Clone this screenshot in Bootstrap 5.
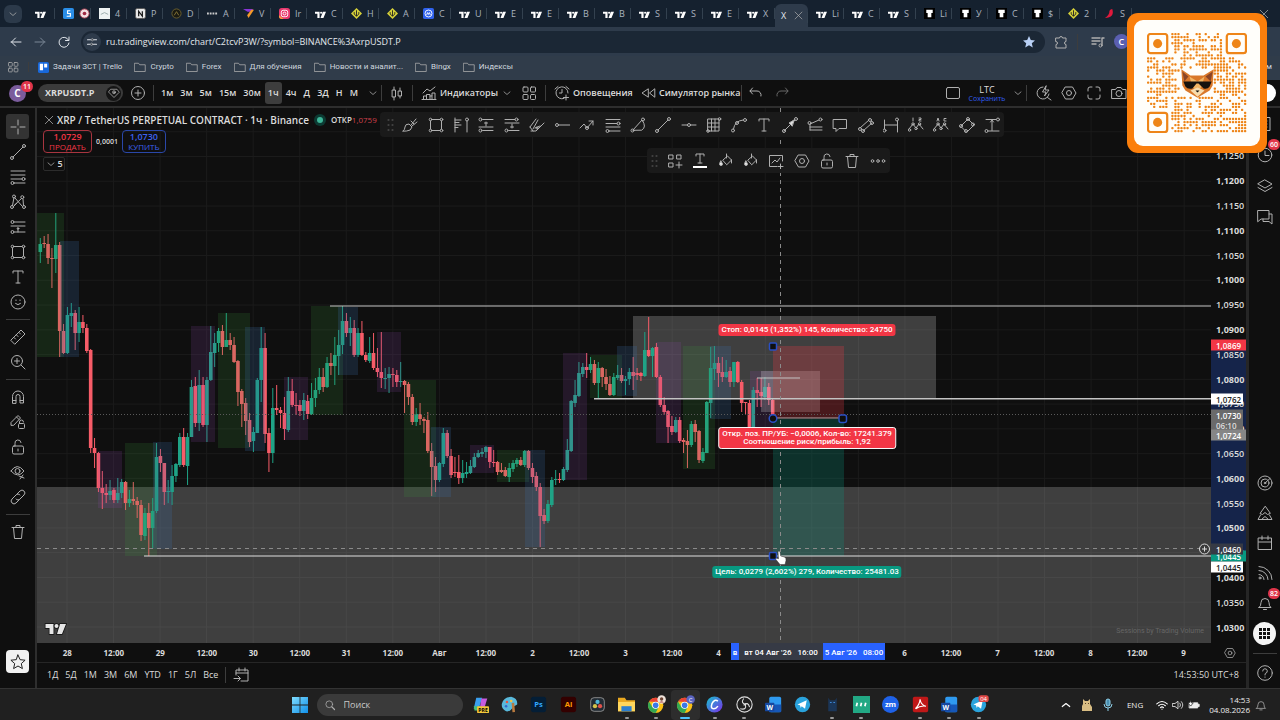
<!DOCTYPE html>
<html lang="ru" data-bs-theme="dark">
<head>
<meta charset="utf-8">
<meta name="viewport" content="width=device-width, initial-scale=1">
<title>XRPUSDT.P — TradingView</title>
<link href="https://cdn.jsdelivr.net/npm/bootstrap@5.3.0/dist/css/bootstrap.min.css" rel="stylesheet">
<style>
body{font:600 9px/12px "Open Sans","Noto Sans",sans-serif;background:#0f0f0f;color:#dbdbdb;min-width:0}
button,input{font:inherit;color:inherit}
button{background:none;border:0;padding:0;display:inline-flex;align-items:center;justify-content:center;flex:none;white-space:nowrap}
a{color:inherit;text-decoration:none}
svg{flex:none;display:block}
.ic{width:16px;height:16px;fill:none;stroke:#b0b0b0;stroke-width:1;stroke-linecap:round;stroke-linejoin:round}
.ic-s{width:12px;height:12px}
.vr-line{width:1px;height:16px;background:#3d3d3d;flex:none}
/* browser chrome */
.tabstrip{height:27px;background:#15212f;color:#aab3bf;font-weight:400}
.tab-more{width:18px;height:18px;border-radius:6px;background:#2c3a4a;margin:0 3px 0 4px}
.tab-item{width:36px;height:27px;padding-left:8px;gap:5px;position:relative;overflow:hidden}
.tab-item::after{content:"";position:absolute;right:0;top:8px;height:11px;width:1px;background:#33414f}
.tab-item svg{width:11px;height:11px}
.tab-first{width:30px;padding-left:10px}
.tab-on{width:33px;height:23px;margin-top:4px;background:#2e3b4b;border-radius:6px 6px 0 0;color:#e4e8ee;gap:7px;padding-left:6px}
.addr{height:29px;background:#2e3b4b}
.addr .navi{width:24px;height:22px}
.omni{height:22px;border-radius:11px;background:#1b2735;margin-left:5px;padding-left:2px}
.omni input{background:none;border:0;outline:0;font-weight:400;color:#e3e7ec;padding:0 0 0 5px;min-width:0}
.site-i{width:18px;height:18px;border-radius:50%;background:#2e3b4b}
.marks{height:24px;background:#303c4a;font:400 8px/12px Roboto,"Noto Sans",sans-serif;color:#cfd6de;gap:12px;padding:0 0 2px 7px}
.marks a{gap:4px}
/* application header */
.apphead{height:26px;background:#0f0f0f}
.split{height:2px;background:#2e2e2e}
.av{width:35px}
.av-c{width:17px;height:17px;border-radius:50%;background:#7b5c9c;color:#fff;font-weight:700;font-size:10px;line-height:17px}
.count{font-size:7px;line-height:11px;height:11px;min-width:11px;border-radius:6px;background:#e0354a;color:#fff;padding:0 2px}
.sym{width:85px;height:18px;border-radius:9px;background:#3b3b3b;padding:0 2px 0 7px;margin-left:3px;font-weight:700}
.sym i{width:15px;height:15px;border-radius:50%;background:#141414}
.tf{width:211px;padding:0 4px}
.tf button{height:22px;border-radius:3px;padding:0 3px}
.tf .on{background:#3d3d3d}
.h-right{width:340px}
.h-right>button{width:25px;height:24px}
.txt-btn{gap:3px;justify-content:start}
/* work area */
.leftbar{width:35px;padding-top:6px}
.leftbar button{width:23px;height:25px}
.leftbar .on{background:#333;border-radius:3px}
.sep{width:24px;height:10px}
.sep::after{content:"";display:block;border-top:1px solid #3d3d3d;margin-top:5px}
.vsplit{width:2px;background:#2e2e2e}
.vsplit-r{width:3px;background:#262626}
.rightbar{width:31px}
.rightbar button{width:31px;height:31px}
.rightbar .low button{height:30px}
.plot{overflow:hidden;background:#0f0f0f}
.plot>svg{width:100%;height:100%}
.legend{left:6px;top:4px}
.sym-name{font-size:10px}
.dot{width:6px;height:6px;border-radius:50%;background:#3db597;box-shadow:0 0 0 3px #0c3b33}
.trade{border:1px solid #a83540;border-radius:4px;color:#f23645;line-height:10px;height:23px;width:49px;flex-direction:column}
.trade small{font-size:8px;font-weight:400}
.trade.buy{border-color:#2a47a8;color:#3d62f0;width:44px}
.hidebox{border:1px solid #2c2c2c;border-radius:2px;width:22px;height:14px}
.float-bar{background:#1a1a1a;border-radius:4px;height:25px}
.float-bar button{flex:1 1 0;min-width:0}
.fb1{left:29.2%;top:4px;width:53.2%;padding-left:3px}
.fb2{left:52%;top:40px;width:20.7%}
.grip{width:15px;flex:none}
.tag{font:500 8px/8px Roboto,"Noto Sans",sans-serif;border-radius:3px;color:#fff;padding:2px 3px;white-space:nowrap;transform:translate(-50%,-50%)}
.red{background:#f23645}.green{background:#089981}
.watermark{right:7px;bottom:6px;font:400 7px/12px Roboto,"Noto Sans",sans-serif;color:#666}
.paxis{width:35px;padding:36px 0 3px}
.paxis .lab{flex:1 1 0;padding-left:5px;position:relative}
.paxis .lab:nth-child(odd){font-weight:700}
.paxis .ptag{position:absolute;left:0;height:11px;font-size:8px;line-height:11px;padding-left:5px;transform:translateY(-50%)}
.band{left:0;right:0;background:#15244a}
.taxis{height:20px;padding:0 4px 0 7px;font-size:8px;font-weight:700;border-bottom:1px solid #262626}
.taxis span{flex:1 1 0;min-width:0;text-align:center;white-space:nowrap}
.taxis .ttag{position:absolute;top:0;height:17px;font:500 8px/19px Roboto,"Noto Sans",sans-serif;color:#fff;white-space:pre}
.ranges{height:25px;font-weight:400;padding:0 7px 2px 10px}
.ranges .rg{gap:7px}
/* taskbar */
.taskbar{height:32px;background:#202020;border-top:1px solid #333;display:grid;grid-template-columns:1fr auto 1fr;align-items:center;font-weight:400}
.search{width:146px;height:22px;border-radius:11px;background:#3a3a3a;padding:0 7px;margin-left:4px}
.search input{background:none;border:0;outline:0;width:100px;padding:0}
.search input::placeholder{color:#c8c8c8;opacity:1}
.apps{width:528px;margin-left:3px}
.apps button{flex:1 1 0;height:30px;position:relative;border-radius:4px}
.apps svg{width:17px;height:17px}
.apps .run::after{content:"";position:absolute;bottom:1px;width:4px;height:2px;background:#999;border-radius:1px}
.apps .act{background:#2d2d2d}
.apps .act::after{width:10px;background:#4cc2ff}
.tray{gap:5px;padding-right:13px;font-size:8px;color:#eee}
/* promo card */
.promo{position:absolute;top:13px;right:13px;width:140px;height:140px;border-radius:11px;background:#fb7f0c;padding:7px}
.promo-in{border-radius:9px;background:#fffefa;padding:13px;height:100%}
.promo svg{width:100%;height:100%}
</style>
</head>
<body class="vh-100 d-flex flex-column overflow-hidden position-relative">

<nav class="tabstrip d-flex align-items-center" id="tabs" aria-label="Вкладки"></nav>

<div class="addr d-flex align-items-center">
  <button class="navi ms-1" data-i="back" aria-label="Назад"></button>
  <button class="navi" data-i="fwd" aria-label="Вперёд"></button>
  <button class="navi" data-i="reload" aria-label="Обновить"></button>
  <div class="omni d-flex align-items-center" style="width:75.3%">
    <span class="site-i d-flex align-items-center justify-content-center" data-is="tune"></span>
    <input class="flex-grow-1" aria-label="Адрес" value="ru.tradingview.com/chart/C2tcvP3W/?symbol=BINANCE%3AxrpUSDT.P">
    <button class="me-2" data-i="starf" aria-label="В закладки"></button>
  </div>
  <button class="ms-2" data-i="puzzle" aria-label="Расширения"></button>
  <span class="vr-line mx-2"></span>
  <button class="ms-1" data-i="playlist" aria-label="Медиа"></button>
  <button class="ms-2 rounded-circle text-white" style="background:#5a5fb0;width:15px;height:15px">C</button>
</div>

<nav class="marks d-flex align-items-center" id="marks" aria-label="Закладки"></nav>

<header class="apphead d-flex align-items-center">
  <button class="av position-relative" aria-label="Профиль"><span class="av-c">C</span><span class="count position-absolute top-0 end-0" style="margin:-4px 2px">11</span></button>
  <button class="sym justify-content-between">XRPUSDT.P <i class="d-flex align-items-center justify-content-center" data-is="gem"></i></button>
  <button style="width:30px" data-i="plusc" aria-label="Сравнить"></button>
  <span class="vr-line"></span>
  <div class="tf d-flex justify-content-between align-items-center">
    <button>1м</button><button>3м</button><button>5м</button><button>15м</button><button>30м</button><button class="on">1ч</button><button>4ч</button><button>Д</button><button>3Д</button><button>Н</button><button>М</button>
  </div>
  <button style="width:16px" data-is="chev" aria-label="Интервалы"></button>
  <span class="vr-line"></span>
  <button style="width:30px" data-i="candle" aria-label="Свечи"></button>
  <span class="vr-line"></span>
  <button class="ms-2 txt-btn" style="width:72px" data-i="indic">Индикаторы</button>
  <button class="ms-1" style="width:20px" data-is="chev" aria-label="Избранное"></button>
  <button style="width:24px" data-i="grid4" aria-label="Шаблоны"></button>
  <span class="vr-line ms-1"></span>
  <button class="ms-2 txt-btn" style="width:86px" data-i="alarm">Оповещения</button>
  <button class="txt-btn" style="width:97px" data-i="rewind">Симулятор рынка</button>
  <span class="vr-line ms-1"></span>
  <button style="width:28px" data-i="undo" aria-label="Отменить"></button>
  <button style="width:24px;opacity:.55" data-i="redo" aria-label="Повторить"></button>
  <div class="h-right ms-auto d-flex align-items-center">
    <button data-i="square" aria-label="Макет"></button>
    <button class="flex-column" style="width:44px;font-weight:400;line-height:10px">LTC<span style="color:#2f5cf0;font-size:7px;line-height:7px">Сохранить</span></button>
    <button style="width:17px" data-is="chev" aria-label="Меню макета"></button>
    <span class="vr-line"></span>
    <button class="ms-1" data-i="quick" aria-label="Поиск"></button>
    <button data-i="hex" aria-label="Настройки"></button>
    <button data-i="full" aria-label="Во весь экран"></button>
    <button data-i="camera" aria-label="Снимок"></button>
    <button class="ms-auto me-1 rounded-pill bg-white" style="width:64px;height:18px" aria-label="Публикация"></button>
  </div>
</header>
<div class="split"></div>

<main class="d-flex flex-grow-1" style="min-height:0">
  <aside class="leftbar d-flex flex-column align-items-center" id="left"></aside>
  <div class="vsplit"></div>

  <section class="flex-grow-1 d-flex flex-column" style="min-width:0">
    <div class="d-flex flex-grow-1" style="min-height:0">
      <div class="plot flex-grow-1 position-relative" style="min-width:0">
        <svg id="chart" class="position-absolute" viewBox="37 108 1174 535" preserveAspectRatio="xMinYMin slice" aria-label="График XRPUSDT.P"></svg>
        <div class="legend position-absolute">
          <div class="d-flex align-items-center text-nowrap" style="height:15px">
            <span data-is="x" style="width:14px"></span><span class="sym-name">XRP / TetherUS PERPETUAL CONTRACT · 1ч · Binance</span>
            <span class="dot ms-2 me-2"></span><span style="font-size:8px">ОТКР<span style="color:#d0404b;font-weight:400">1,0759</span></span>
          </div>
          <div class="d-flex align-items-center" style="margin-top:3px;gap:4px">
            <button class="trade">1,0729<small>ПРОДАТЬ</small></button><span style="font-size:7px">0,0001</span>
            <button class="trade buy">1,0730<small>КУПИТЬ</small></button>
          </div>
          <button class="hidebox mt-1" data-is="chev">5</button>
        </div>
        <div class="float-bar fb1 position-absolute d-flex align-items-center" id="fb1"></div>
        <div class="float-bar fb2 position-absolute d-flex align-items-center" id="fb2"></div>
        <div id="tags"></div>
        <span class="watermark position-absolute">Sessions by Trading Volume</span>
      </div>
      <div class="paxis d-flex flex-column position-relative" id="paxis"></div>
    </div>
    <div class="d-flex">
      <div class="taxis flex-grow-1 d-flex align-items-center position-relative" id="taxis" style="min-width:0"></div>
      <button class="taxis" style="width:35px" data-is="hex" aria-label="Настройки шкалы"></button>
    </div>
    <div class="ranges d-flex align-items-center justify-content-between">
      <div class="rg d-flex align-items-center"><button>1Д</button><button>5Д</button><button>1М</button><button>3М</button><button>6М</button><button>YTD</button><button>1Г</button><button>5Л</button><button>Все</button><span class="vr-line"></span><button data-i="goto" aria-label="Перейти к дате"></button></div>
      <button>14:53:50 UTC+8</button>
    </div>
  </section>

  <div class="vsplit-r"></div>
  <aside class="rightbar d-flex flex-column justify-content-between align-items-center">
    <div class="d-flex flex-column" id="r1"></div>
    <div class="low d-flex flex-column align-items-center" id="r2"></div>
  </aside>
</main>

<footer class="taskbar">
  <div></div>
  <div class="d-flex align-items-center">
    <button style="width:26px;height:30px" aria-label="Пуск"><svg width="16" height="16" viewBox="0 0 16 16"><defs><linearGradient id="wg" x2="1" y2="1"><stop stop-color="#7fdcff"/><stop offset="1" stop-color="#1090e8"/></linearGradient></defs><path fill="url(#wg)" d="M0 0h7.6v7.6H0zM8.4 0H16v7.6H8.4zM0 8.4h7.6V16H0zM8.4 8.4H16V16H8.4z"/></svg></button>
    <label class="search d-flex align-items-center gap-2" data-is="glass"><input placeholder="Поиск" aria-label="Поиск"></label>
    <div class="apps d-flex" id="apps"></div>
  </div>
  <div class="tray d-flex align-items-center justify-content-end">
    <button data-is="up" aria-label="Значки"></button>
    <svg class="mx-1" width="12" height="13" viewBox="0 0 12 13"><path fill="#d9bd83" d="M2 1l2 2h3l2-2v5l2 3v4H1V8l1-2z"/><path fill="#5b4426" d="M4 5h1v1H4zM7 5h1v1H7z"/></svg>
    <svg class="me-1" width="12" height="14" viewBox="0 0 12 14" fill="none" stroke="#8fd0e8"><rect x="4" y="1" width="4" height="7" rx="2" fill="#4a8fb0"/><path d="M2 6a4 4 0 0 0 8 0M6 10v3"/></svg>
    <span class="mx-1">ENG</span>
    <span class="d-flex gap-1 ms-1" id="sys"></span>
    <span class="text-end ms-1" style="line-height:10px">14:53<br>04.08.2026</span>
    <button data-is="bell" aria-label="Уведомления"></button>
  </div>
</footer>

<div class="promo"><div class="promo-in"><svg id="qr" viewBox="0 0 99 99" aria-label="QR-код"></svg></div></div>

<script>
// Line icons on a 16-unit grid. c(x,y,r) is a shorthand for a small ring.
const c=(x,y,r=1.5)=>`<circle cx="${x}" cy="${y}" r="${r}"/>`, p=(d,a='')=>`<path d="${d}" ${a}/>`;
const I={
 back:p('M13 8H3M7.500 4L3.500 8l4 4','stroke="#dfe4ea"'),
 fwd:p('M3 8h10M8.500 4l4 4-4 4','stroke="#7b8897"'),
 reload:p('M12.500 6A5 5 0 1 0 13 9M13 3v3.500H9.500','stroke="#dfe4ea"'),
 tune:p('M2 5h4M11 5h3M2 11h3M10 11h4','stroke="#dfe4ea" stroke-width="1.5"')+c(8.5,5)+c(7.5,11),
 starf:p('M8 2l1.800 4 4.200.4-3.200 2.800 1 4.300L8 11.300 4.200 13.500l1-4.300L2 6.400 6.200 6z','fill="#b9d0f5" stroke="none"'),
 puzzle:p('M3 4h3.500a1.500 1.500 0 0 1 3 0H13v3.500a1.500 1.500 0 0 0 0 3V14H3v-3.500a1.500 1.500 0 0 0 0-3z'),
 playlist:p('M2 4h8M2 7h8M2 10h4M12 11V4h2','stroke-width="1.4"')+c(10.5,11.500),
 gem:p('M4 3h8l3 4-7 7-7-7z')+c(8,7,2)+c(8,7,.6),
 plusc:c(8,8,6.5)+p('M8 5v6M5 8h6'), chev:p('M4 6.500l4 3.500 4-3.500'), up:p('M3 10l5-4 5 4','stroke="#fff" stroke-width="1.6"'),
 candle:p('M5 2v3M5 12v3M11 3v3M11 11v2')+'<rect x="3.500" y="5" width="3" height="7"/><rect x="9.500" y="6" width="3" height="5"/>',
 indic:p('M2 8l4-4 3 2 5-4M1 14.500h14M2.500 14v-3h3M5.500 14V9.500h3.500V14M9 11h2V8h3v6.500M11 14v-3'),
 grid4:['2 2','9.500 2','2 9.500','9.500 9.500'].map(s=>{const[x,y]=s.split(' ');return`<rect x="${x}" y="${y}" width="5" height="5" rx="1"/>`}).join(''),
 alarm:p('M10 13.500A6 6 0 1 1 14 8M8 4.500V8H5.500M1 4l3-2.500M12 1.500L15 4M12 10v5M9.500 12.500h5'),
 rewind:p('M8 4L2 8l6 4zM14.500 4l-5 4 5 4z'), undo:p('M4.500 3L2 6l2.500 3M2 6h7a4 4 0 0 1 4 5'), redo:p('M11.500 3L14 6l-2.500 3M14 6H7a4 4 0 0 0-4 5'),
 square:'<rect x="1.500" y="2.500" width="13" height="11" rx="1.500"/>',
 quick:p('M7 2a6 6 0 1 0 6 7M11.500 12.500L15 15M10 1L6.500 7H10L8.500 11 13 5H9.500z'),
 hex:p('M4.500 2h7L15 8l-3.500 6h-7L1 8z')+c(8,8,2.5),
 full:p('M2 6V4a2 2 0 0 1 2-2h2M10 2h2a2 2 0 0 1 2 2v2M14 10v2a2 2 0 0 1-2 2h-2M6 14H4a2 2 0 0 1-2-2v-2'),
 camera:p('M1 4.500h3.500L6 2.500h4l1.500 2H15v9H1z')+c(8,8.500,3),
 cross:p('M8 1v5M8 10v5M1 8h5M10 8h5'),
 trend:p('M3 13L13 3')+c(2,14)+c(14,2),
 fibs:p('M1 2h14M1 6h14M1 10h11M4 14h11')+c(13.500,10)+c(2.500,14),
 fibs2:p('M1 2.500h14M1 6.500h11M1 10h14M4 14h11')+c(13.500,6.500)+c(2.500,14),
 xabcd:p('M2.500 11.500L4 3.500M5 4l7 8M4 11.500l7.500-7M13 5l.5 6.500M4 12l3-3')+c(4,2.500)+c(12.300,3.200)+c(2,13)+c(14,13),
 forecast:p('M5 3h10M1 7h14M5 13h10M8 9v4')+c(2.500,3)+c(2.500,13)+c(8,9.500,.8),
 long:p('M5 2.500h10M5 13.500h10M1 10h14M8 9V5M6.500 6h3')+c(2.500,2.500)+c(2.500,13.500),
 short:p('M1 2.500h10M1 6h14M5 13.500h10M8 7v4M6.500 10h3')+c(12.500,2.500)+c(2.500,13.500),
 rect:p('M4 2.500h8M4 13.500h8M2.500 4v8M13.500 4v8')+c(2.500,2.500,1.300)+c(13.500,2.500,1.300)+c(2.500,13.500,1.300)+c(13.500,13.500,1.300),
 text:p('M3 4V2h10v2M8 2v12M6 14h4'), textu:p('M4 3V1h8v2M8 1v9M6 10h4')+p('M1 13h14v2H1z','fill="#fff" stroke="none"'),
 smile:c(8,8,7)+p('M5.500 9.500q2.500 2.500 5 0M6 6v.500M10 6v.500'),
 ruler:p('M1 11L11 1l4 4L5 15zM4 8.500l1.500 1.500M6.500 6L8 7.500M9 3.500L10.500 5'),
 zoom:c(7,7,5.5)+p('M11 11l4 4M7 4.500v5M4.500 7h5'), glass:c(7,7,4.5)+p('M10.500 10.500L14 14','stroke-width="1.600"'),
 magnet:p('M2.500 14V7.500a5.500 5.500 0 0 1 11 0V14h-3.500V7.500a2 2 0 0 0-4 0V14zM2.500 11.500H6M10 11.500h3.500'),
 penlock:p('M1 11V8.500l7-7L10.500 4 4 11zM6.500 3L9 5.500M9.500 9.500V8a2 2 0 0 1 4 0')+'<rect x="8.500" y="9.500" width="6" height="5" rx="1"/>',
 lock:'<rect x="2.500" y="7" width="11" height="8" rx="1.500"/>'+p('M5 7V4.500a3 3 0 0 1 6-1M8 10v2'),
 eye:p('M1 7q6-9 13 0-6 8-13 0M9 12l5 2M10 15l3-4')+c(7.500,7,2.5),
 link:p('M7 5l3-3a2.500 2.500 0 0 1 4 4l-4 4a2.500 2.500 0 0 1-4 0M9 11l-3 3a2.500 2.500 0 0 1-4-4l4-4a2.500 2.500 0 0 1 4 0'),
 trash:p('M2 3.500h12M6 3.500V1.500h4v2M3.500 3.500l1 11h7l1-11'),
 star:p('M8 1l2.100 4.700 5 .5-3.800 3.400 1.100 5L8 12l-4.400 2.600 1.100-5L.9 6.200l5-.5z','stroke="#222"'),
 brush:p('M1 14q2-1 2-4t4-3l3 3q-1 4-5 4zM9 8l5-6M10 9l5-4M9 4l3 3'),
 profile:p('M2 1v14M2 3h6M2 5.500h4M2 8h6M2 10.500h3M14 4v11')+c(14,2.500),
 high:p('M1 10l6-8M4 12L9 3M2 14h5L15 6M6 11l5-2M1 10l3 4')+c(8,11,1),
 hray:p('M5 8h11')+c(3,8), zig:p('M1 11l4-4 3 4 6-7M10 4h4v4')+c(8,11), 
 arc:p('M3 13L12 3q5 7 0 10z')+c(13,2.500)+c(2.500,13.500), hline:p('M1 8h5.500M9.500 8H15')+c(8,8),
 gridb:p('M2 2h11v12H2zM5.500 2v12M9 2v12M2 6h11M2 10h11')+c(13.500,2,1.300)+c(2,14,1.300),
 curve:p('M2.500 12q1-8 9.500-9')+c(2,13.500)+c(6,6)+c(14,3),
 arrow:p('M2 14L13 3')+p('M12 3L7 6l3 3z','fill="#ddd"')+c(14,2)+c(2,14),
 pitch:p('M3 7L12 3M3 10h12M3 13h12M3 7v6')+c(2.500,6)+c(13.500,2.500),
 comment:p('M1.500 2.500h13v9H7l-3 3v-3H1.500z'), channel:p('M2 11l9-8M5 14l9-8')+c(2,12)+c(12,3)+c(5,14)+c(14,6),
 range:p('M1.500 3v9M14.500 4v11M2 8h12')+c(1.500,13.500)+c(14,2.500),
 wave:p('M1 12l4-5 3 4 3-4 4 5')+c(1.500,13,1.200)+c(5,7,1.200)+c(8,11.500,1.200)+c(11.500,7,1.200)+p('M5 1v3M11 1h2v1.500h-2V4h2'),
 wave2:p('M1 12l4-5 3 4 3-4 4 5')+c(1.500,13,1.200)+c(5,7,1.200)+c(8,11.500,1.200)+c(11.500,7,1.200)+p('M4 4l1-3 1 3M13 1.500h-2v2.500h2'),
 rot:p('M2 9l7-7 6 6-7 7z')+c(9,2,1.500)+c(2,9,1.500)+c(14,7.500,1.500)+c(7,14,1.500),
 measure:p('M2 2.500h10M5 14h10M8 3v10.500M6.500 5L8 3l1.500 2')+c(14,2.500)+c(2.500,14),
 addt:p('M2 2h4v4H2zM10 2h4v4h-4zM2 10h4v4H2zM12 9v6M9 12h6'),
 bucket:p('M5 7l4.500-4 4 4-4.500 4.500zM8.500 1v4M13.500 7v3')+p('M1.500 11a1.500 1.500 0 1 0 3 0L3 8z','fill="#eee"'),
 img:p('M14.500 8V2.500h-13v11H9M4 10l3-3 2 2 3-4M12.500 11v5M10 13.500h5'),
 dots:c(2.500,8,1.300)+c(8,8,1.300)+c(13.500,8,1.300),
 list:p('M2 1.500h11v13H2zM5 5h5M5 8h5M5 11h5'), clock:c(8,8,6.8)+p('M8 4v4.500h4'),
 layers:p('M8 2l7 4-7 4-7-4zM1 9.500l7 4 7-4'), chat:p('M1 1.500h11v8.500H4L1 12.500zM12 5h3v10l-3-2.500H6V10'),
 target:c(8,8,7)+c(8,8,4)+c(8,8,.8)+p('M8 8l5-4.500'), pyr:p('M8 1.500L3 8.500l2.500 1L8 7.500l2.500 2 2.500-1zM3.500 10L1 14.500h14L12.500 10M4.500 14.500L8 11.500l3.500 3'),
 cal:p('M1.500 3h13v11.500h-13zM1.500 7h13M5 1v3.500M11 1v3.500'), rss:c(3,13,1)+p('M2 9.500a5 5 0 0 1 5 5M2 5.500a9 9 0 0 1 9 9M2 1.500a13 13 0 0 1 13 13'),
 bell:p('M2 12.500h12q-2-1-2-5a4 4 0 0 0-8 0q0 4-2 5zM6.500 14.500h3'), help:c(8,8,7.3)+p('M5.700 6a2.300 2.300 0 1 1 2.800 2.300Q8 8.500 8 10M8 12v.3'),
 goto:p('M3 8V3h12v11H8M3 6h12M6 1v3M12 1v3M1 11.500h6M5 9l2.500 2.500L5 14'), x:p('M3 3l10 10M13 3L3 13'),
 folder:p('M1 3h5l1.500 2H15v9H1z'), grip:[3,8,13].map(y=>`<path d="M5 ${y}h1M9 ${y}h1" stroke="#666"/>`).join(''),
 wifi:p('M1 6.500q7-6.500 14 0M3.500 9q4.500-4 9 0M6 11.500q2-2 4 0M8 13.500v.2','stroke="#fff" stroke-width="1.400"'),
 vol:p('M1 6h3l4-3v10l-4-3H1zM10.500 5.500q2 2.500 0 5M12.500 3.500q4 4.500 0 9','stroke="#fff"'),
 bat:p('M2 5h11v7H2zM13 7h2v3h-2z','fill="#eee" stroke="#eee"')+p('M1 6l3-4v3h3L4 9z','fill="#fff" stroke="#202020"')
};
const ic=(n,s='')=>`<svg class="ic ${s}" viewBox="0 0 16 16" aria-hidden="true">${I[n]}</svg>`;
document.querySelectorAll('[data-i]').forEach(e=>e.insertAdjacentHTML('afterbegin',ic(e.dataset.i)));
document.querySelectorAll('[data-is]').forEach(e=>e.insertAdjacentHTML('afterbegin',ic(e.dataset.is,'ic-s')));
const $=id=>document.getElementById(id), btn=(n,k='')=>`<button class="${k}" aria-label="${n}">${ic(n)}</button>`;

// Browser tabs: favicon and the first letter of the title.
const tv='<path fill="#fff" d="M0 4h5v7H2.600V6.400H0zM8.600 4H12L9.200 11H6z"/><circle cx="6.700" cy="5.200" r="1.200" fill="#fff"/>';
const fav={tv,
 sb:'<rect width="12" height="12" rx="2" fill="#2a8ee8"/><path d="M8 3H5v3h3v3H4" stroke="#fff" stroke-width="1.300" fill="none"/>',
 pic:'<rect width="12" height="12" fill="#eef2f2"/><path d="M2 7l4-2 4 2" stroke="#9aa" fill="none"/>',
 no:'<rect x=".5" y=".5" width="11" height="11" rx="2" fill="#e8e8e8" stroke="#555"/><path d="M4 9V3.500L8 9V3.500" stroke="#111" stroke-width="1.300" fill="none"/>',
 gold:'<circle cx="6" cy="6" r="5" fill="#1a1a12" stroke="#6f6230"/><path d="M3.500 8L6 4l2.500 4" stroke="#8a7838" fill="none"/>',
 by:'<path d="M0 6h12" stroke="#ccc" stroke-width="2" stroke-dasharray="2 1"/>',
 v:'<path fill="#8a35d8" d="M0 1h11L9 4H5z"/><path fill="#f59a2b" d="M12 2L6 11 4.500 8 9 2z"/>',
 ig:'<rect width="12" height="12" rx="3" fill="#e8386e"/><path fill="#f9a03c" d="M0 8l5 4H3a3 3 0 0 1-3-3z"/><rect x="2.500" y="2.500" width="7" height="7" rx="2" fill="none" stroke="#fff"/><circle cx="6" cy="6" r="1.600" fill="none" stroke="#fff"/>',
 ye:'<path d="M6 0l6 6-6 6-6-6z" fill="#d6d13a"/><path d="M3.500 4.500v2L6 9l2.500-2.500v-2M6 2.500V9" stroke="#222" fill="none"/>',
 cm:'<rect width="12" height="12" rx="2" fill="#2f62ee"/><circle cx="6" cy="6" r="3.800" fill="none" stroke="#fff"/><path d="M4 7.500L5 5l1 2 1-2 1 2.500" stroke="#fff" fill="none"/>',
 bk:'<rect width="12" height="12" fill="#000"/><path fill="#fff" d="M2.500 2h7v3.500H8V10H4V5.500H2.500z"/>',
 ch:'<path fill="#e0193c" d="M9 1q3 9-8 10 5-3 5-8 1-2 3-2z"/>'};
const fv=n=>`<svg viewBox="0 0 12 12">${fav[n]}</svg>`;
const tabs='sb: pic:4 no:P gold:D by:A v:V ig:Ir tv:C ye:H ye:A cm:C tv:U tv:E tv:E tv:B tv:B tv:S tv:S tv:E tv:X ON tv:Li tv:C tv:S bk:Li bk:У bk:C bk:$ ye:2 ch:S'.split(' ');
$('tabs').innerHTML=`<button class="tab-more" aria-label="Список">${ic('chev','ic-s')}</button><a href="#" class="tab-item tab-first d-flex align-items-center">${fv('tv')}</a>`+
 tabs.map(t=>{if(t=='ON')return`<a href="#" class="tab-item tab-on d-flex align-items-center">X ${ic('x','ic-s')}</a>`;
 const[a,b]=t.split(':');return`<a href="#" class="tab-item d-flex align-items-center flex-shrink-0">${fv(a)}${b||'<svg viewBox="0 0 12 12"><circle cx="6" cy="6" r="5" fill="#f3dfe2" stroke="#b04458"/><circle cx="6" cy="6" r="2" fill="#a02842"/></svg>'}</a>`}).join('')+
 '<button class="ms-auto" style="margin-right:10px" aria-label="Закрыть">'+ic('x','ic-s')+'</button>';
$('marks').innerHTML=`<span class="d-flex align-items-center" style="gap:9px">${ic('grid4','ic-s')}<span class="vr-line" style="height:10px"></span></span><a href="#" class="d-flex align-items-center"  style="margin-left:-3px"><svg width="11" height="11" viewBox="0 0 12 12"><rect width="12" height="12" rx="2" fill="#1868db"/><path fill="#fff" d="M2 2h3.500v7H2zM6.700 2H10v4H6.700z"/></svg>Задачи ЗСТ | Trello</a>`+
 ['Crypto','Forex','Для обучения','Новости и аналит...','Bingx','Индексы'].map(t=>`<a href="#" class="d-flex align-items-center">${ic('folder','ic-s')}${t}</a>`).join('')+'<a href="#" class="ms-auto pe-2">м</a>';

// Side bars and floating tool bars.
$('left').innerHTML='cross trend fibs xabcd forecast rect text smile | ruler zoom | magnet penlock lock eye link | trash'.split(' ').map(n=>n=='|'?'<div class="sep"></div>':btn(n,n=='cross'?'on':'')).join('')+
 `<button class="mt-auto rounded-1" style="background:#f2f2f2;height:23px;margin-bottom:15px" aria-label="Избранные">${ic('star')}</button>`;
const badge=t=>`<span class="count position-absolute top-0 end-0">${t}</span>`;
$('r1').innerHTML=btn('list')+`<button class="position-relative" aria-label="Оповещения">${ic('clock')}${badge(60)}</button>`+btn('layers')+btn('chat');
$('r2').innerHTML='target pyr cal rss'.split(' ').map(n=>btn(n)).join('')+`<button class="position-relative" aria-label="Уведомления">${ic('bell')}${badge(82)}</button>
 <button aria-label="Приложения"><svg width="23" height="23" viewBox="0 0 23 23"><circle cx="11.500" cy="11.500" r="11.500" fill="#f4f4f4"/>${[6,10,14].map(y=>[6,10,14].map(x=>`<rect x="${x}" y="${y}" width="3" height="3" fill="#111"/>`).join('')).join('')}</svg></button><div class="sep"></div>`+btn('help');
const grip=`<span class="grip">${ic('grip')}</span>`;
$('fb1').innerHTML=grip+'brush rect profile long short high hray zig fibs2 arc trend hline gridb curve text arrow pitch comment channel range wave wave2 rot measure'.split(' ').map(n=>btn(n)).join('');
$('fb2').innerHTML=grip+'addt textu bucket bucket img hex lock trash dots'.split(' ').map(n=>btn(n)).join('');
$('sys').innerHTML=ic('wifi','ic-s')+ic('vol','ic-s')+ic('bat','ic-s');

// Hourly candles: body top, body bottom, high, low, direction (screen units of the chart).
const K=`244 252 238 263 u,243 244 236 248 d,244 258 234 264 d,258 259 248 288 d,245 259 213 273 u,245 331 242 357 d,331 353 324 354 d,315 353 307 354 u,313 316 303 327 u,313 333 310 350 d,322 333 307 342 u,322 328 315 333 d,328 351 324 353 d,350 448 349 453 d,448 453 438 468 d,453 488 452 492 d,488 493 471 509 d,493 495 484 503 d,491 495 480 500 u,490 500 488 503 d,493 500 478 503 u,482 493 479 498 u,482 503 481 510 d,499 503 490 507 u,499 501 482 505 d,501 505 497 518 d,505 535 500 541 d,513 536 508 540 u,513 528 503 556 d,511 528 498 548 u,457 511 443 513 u,456 463 449 472 d,463 492 463 505 d,491 492 480 503 u,476 492 465 505 u,464 476 463 482 u,437 465 433 467 u,437 465 428 467 d,437 466 433 485 u,387 437 380 437 u,386 423 377 427 d,385 423 370 431 u,385 425 377 427 d,380 425 377 442 u,352 380 326 381 u,343 353 333 367 u,331 343 328 352 u,331 347 325 355 d,340 347 313 347 u,340 345 333 350 d,345 362 337 363 d,361 392 360 406 d,391 404 389 427 d,403 421 398 435 d,420 442 413 447 d,432 441 427 452 u,380 433 378 433 u,348 380 327 402 u,348 434 333 443 d,433 453 428 472 d,408 453 388 463 u,408 410 385 415 d,410 413 407 428 d,413 429 397 440 d,391 430 377 432 u,391 405 379 407 d,405 406 393 415 d,405 411 400 416 d,400 411 393 420 u,401 414 395 419 d,398 414 383 415 u,390 398 378 407 u,377 390 368 394 u,377 387 368 392 d,363 387 357 388 u,363 366 353 375 d,355 366 337 385 u,345 356 330 375 u,321 345 306 354 u,321 333 313 337 d,328 333 317 346 u,328 355 320 357 d,333 355 328 357 u,333 355 321 356 d,355 360 352 362 d,353 361 337 363 u,353 368 333 370 d,368 372 348 377 d,372 378 332 388 d,378 379 368 389 u,374 378 367 393 u,374 375 368 387 d,375 382 370 387 d,381 382 362 387 u,381 385 380 413 d,384 397 382 405 d,397 422 394 425 d,414 422 408 426 u,414 419 403 425 d,419 421 417 433 d,420 451 412 453 d,451 467 443 496 d,466 480 457 492 d,463 480 462 482 u,433 464 428 467 u,433 456 430 458 d,456 475 449 478 d,472 473 457 477 d,472 478 455 484 d,473 478 460 483 u,472 474 462 478 u,466 473 460 474 u,457 467 453 468 u,453 457 450 458 u,452 454 448 457 u,447 452 446 458 u,447 462 447 468 d,462 463 450 467 d,462 472 461 475 d,470 472 463 473 d,470 476 467 477 d,468 477 463 482 u,463 469 460 472 u,460 464 458 467 u,460 465 457 466 d,451 465 450 467 u,451 468 450 470 d,468 477 463 483 d,476 487 472 491 d,487 516 483 547 d,515 521 509 524 d,504 521 500 523 u,480 505 477 507 u,479 480 470 485 u,479 480 473 483 d,469 480 467 481 u,450 470 439 472 u,401 451 400 452 u,395 403 380 407 u,373 396 362 397 u,367 374 363 377 u,367 370 353 378 d,364 370 357 373 u,364 383 360 385 d,368 383 362 398 u,368 377 367 387 d,377 384 369 390 d,384 395 376 396 d,377 395 373 396 u,375 378 365 380 u,375 381 368 383 d,379 381 376 395 u,372 379 368 385 u,372 376 357 390 d,373 375 368 380 d,373 376 372 381 d,350 376 332 377 u,350 356 317 357 d,348 356 347 377 u,347 377 343 378 d,377 405 375 407 d,405 412 397 415 d,411 427 410 443 d,426 432 416 435 d,420 432 417 433 u,420 441 417 443 d,440 442 438 453 d,441 445 430 468 d,424 445 421 447 u,424 432 420 442 d,431 460 430 463 d,452 461 448 463 u,402 453 401 453 u,368 403 347 418 u,363 369 346 380 u,363 373 357 387 d,372 377 357 382 d,372 377 360 378 u,371 382 367 387 d,362 382 362 387 u,362 382 361 383 d,382 403 380 412 d,402 403 402 415 d,403 430 400 432 d,390 430 387 432 u,390 393 378 407 d,392 396 378 407 d,387 397 377 400 u,387 400 383 405 d,400 415 398 416 d`.split(',').map(s=>s.split(' '));
const col={u:'#1fa386',d:'#f75c68'}, rect=(x,y,X,Y,f,a='')=>`<rect x="${x}" y="${y}" width="${X-x}" height="${Y-y}" fill="${f}" ${a}/>`;
const G='rgba(60,160,60,.16)',B='rgba(60,110,170,.22)',P='rgba(140,70,170,.17)';
let s='';
for(let i=0;i<25;i++)s+=rect(66.5+46.55*i,108,67.5+46.55*i,643,'#1b1b1b');
for(let i=-1;i<20;i++)s+=rect(37,156+24.76*i,1211,157+24.76*i,'#1b1b1b');
s+=rect(37,487,1211,643,'rgba(255,255,255,.2)')+rect(633,316,936,398,'rgba(255,255,255,.2)');
K.forEach(([a,b,h,l,k],i)=>{const x=40.3+3.875*i;s+=rect(x-.5,+h,x+.5,+l,col[k])+rect(x-1.8,+a,x+1.8,Math.max(+b,+a+1),col[k])});
[[37,213,64,357,G],[125,443,157,556,G],[218,313,250,448,G],[311,306,343,415,G],[404,380,436,497,G],[497,450,529,482,G],[590,355,622,398,G],[683,346,715,469,G],
 [60,241,79,357,B],[153,442,172,549,B],[245,327,265,451,B],[338,307,358,375,B],[431,427,451,497,B],[525,450,545,547,B],[617,346,637,396,B],[710,346,731,419,B],
 [98,451,122,508,P],[191,326,215,442,P],[284,377,308,440,P],[377,332,401,392,P],[470,445,494,473,P],[563,353,587,480,P],[656,342,681,443,P],[750,371,773,430,P]].forEach(r=>s+=rect(...r));
s+=rect(761,371,820,412,'rgba(255,255,255,.2)')+rect(773,346,844,418,'rgba(242,54,69,.25)')+rect(773,419,844,556,'rgba(8,153,129,.25)')
 +rect(330,305.5,1211,306.5,'#c4c4c4')+rect(594,398,1211,399.5,'#c4c4c4')+rect(144,555.5,1211,556.5,'#e0e0e0')+rect(757,377.5,800,378.5,'#c4c4c4')+rect(773,417.5,843,418.5,'#b9a3a3')
 +'<path d="M37 414.500H1211" stroke="#5a5a5a" stroke-dasharray="1 2"/><path d="M37 548.500H1200M780.500 108V643" stroke="#8a8a8a" stroke-dasharray="4 4"/>'
 +'<g fill="#0f0f0f" stroke="#2a4fc4" stroke-width="1.500"><rect x="769.500" y="343" width="7" height="7" rx="1"/><circle cx="773" cy="418.500" r="3.800"/><rect x="839" y="415" width="7.500" height="7.500" rx="2"/><rect x="769.500" y="552.500" width="7" height="7" rx="1"/></g>'
 +'<path d="M778 551.500q1.500-1 2 .5l.7 4 3.800 1q2 1 1.500 3.500l-1 4h-5l-4.500-5.500q1-1.500 3-.2z" fill="#fff" stroke="#333" stroke-width=".5"/>'
 +'<g fill="#3a3a3a" stroke="#ddd"><circle cx="1204.500" cy="549" r="5"/><path d="M1202 549h5M1204.500 546.500v5"/></g>'
 +'<g fill="#e6e6e6" stroke="#111" stroke-width="1.500" paint-order="stroke"><path d="M45.500 624h8v10h-4v-6h-4zM60 624h6l-4 10h-5z"/><circle cx="56.500" cy="626" r="2"/></g>';
$('chart').innerHTML=s;
const px=x=>((x-37)/1174*100).toFixed(2)+'%',py=y=>((y-108)/535*100).toFixed(2)+'%';
$('tags').innerHTML=[[807,330,'red','Стоп: 0,0145 (1,352%) 145, Количество: 24750'],[807,438,'red border border-light','Откр. поз. ПР/УБ: −0,0006, Кол-во: 17241.379<br>Соотношение риск/прибыль: 1,92'],[807,572,'green','Цель: 0,0279 (2,602%) 279, Количество: 25481.03']]
 .map(([x,y,k,t])=>`<div class="tag ${k} position-absolute text-center" style="left:${px(x)};top:${py(y)}">${t}</div>`).join('');

// Price scale.
let a=`<div class="band position-absolute" style="top:${py(346)};height:${(210/535*100).toFixed(2)}%"></div>`;
for(let i=0;i<20;i++)a+=`<div class="lab d-flex align-items-center">${(1.125-.005*i).toFixed(4).replace('.',',')}</div>`;
a+=[[556,'1,0445','#089981','#fff',35],[345.5,'1,0869','#f23645','#fff',35],[398.5,'1,0762','#fff','#222',32],[414.5,'1,0730','#6a6a6a','#fff',32],[424.5,'06:10','#6a6a6a','#ddd',32],[435.5,'1,0724','#868686','#fff',35],[548.5,'1,0460','#363a45','#fff',32],[567,'1,0445','#fff','#222',32]]
 .map(([y,t,b,f,w])=>`<div class="ptag" style="top:${py(y)};background:${b};color:${f};width:${w}px">${t}</div>`).join('');
$('paxis').innerHTML=a;
// Time scale; labels that fall under the highlighted range stay empty.
$('taxis').innerHTML='28,12:00,29,12:00,30,12:00,31,12:00,Авг,12:00,2,12:00,3,12:00,4,,,,6,12:00,7,12:00,8,12:00,9'.split(',').map(d=>`<span>${d}</span>`).join('')
 +[[731,739,'#2962ff',"в"],[823,885,'#2962ff',"5 Авг '26   08:00"],[739,823,'#363a45',"вт 04 Авг '26   16:00"]].map(([l,r,b,t])=>`<div class="ttag text-center" style="left:${px(l)};width:${((r-l)/1174*100).toFixed(2)}%;background:${b}">${t}</div>`).join('');

// Taskbar applications.
const sq=(b,f,t,z=9)=>`<rect x="1" y="1" width="18" height="18" rx="3" fill="${b}"/><text x="10" y="13.500" text-anchor="middle" font-size="${z}" font-weight="700" fill="${f}">${t}</text>`;
const chrome='<circle cx="9" cy="11" r="9" fill="#fbc116"/><path fill="#ea4335" d="M1.200 6.500A9 9 0 0 1 17 7H9z"/><path fill="#34a853" d="M1.200 6.500A9 9 0 0 0 9 20l3-6-7-1z"/><circle cx="9" cy="11" r="4.200" fill="#fff"/><circle cx="9" cy="11" r="3.300" fill="#3b78e7"/>';
const word='<rect x="5" y="1" width="14" height="18" rx="2" fill="#2f9af0"/><path fill="#1657b8" d="M5 10h14v9H5z"/><rect y="8" width="11" height="10" rx="1" fill="#1648a0"/><text x="5.500" y="16" text-anchor="middle" font-size="8" font-weight="700" fill="#fff">W</text>';
const tg='<circle cx="10" cy="10" r="9" fill="#2aa3dc"/><path fill="#fff" d="M4 10l11-5-2 10-4-3-1 2-1-3z"/>';
const A=[['','<path fill="#3aa0f0" d="M5 2h7l-4 13H2z"/><path fill="#c65be0" d="M11 3h7l-4 13H9z"/><path fill="#48c078" d="M2 12h8l-1 5H3z"/><rect x="6" y="12" width="14" height="8" rx="1" fill="#f3c73a"/><text x="13" y="18.500" font-size="6" text-anchor="middle" font-weight="700">PRE</text>'],
['','<path fill="#59b9dc" d="M1 9Q3 1 12 1q8 2 7 9l-5 3q-3 6-8 5-6-3-5-9z"/><circle cx="7" cy="7" r="1.500" fill="#e8543f"/><circle cx="12" cy="6" r="1.500" fill="#f5c33b"/><circle cx="6" cy="12" r="1.500" fill="#3566cc"/><path d="M14 8l1 11" stroke="#b97a3e" stroke-width="3"/>'],
['',sq('#041e36','#31a8ff','Ps')],['',sq('#330000','#ff9a00','Ai')],
['','<rect x="2" y="2" width="16" height="16" rx="4" fill="#222b33" stroke="#999"/><circle cx="10" cy="7" r="2.500" fill="#4fb6d8"/><circle cx="7" cy="12" r="2.500" fill="#d5c24a"/><circle cx="13" cy="12" r="2.500" fill="#e0524a"/>'],
['run','<path fill="#e9a820" d="M0 2h8l2 3h10v13H0z"/><path fill="#ffd65c" d="M0 7h20v11H0z"/><path fill="#2b7fd0" d="M4 12h12v6H4z"/>'],
['run',chrome+'<circle cx="16" cy="4" r="5" fill="#efe2da"/><circle cx="16" cy="3.500" r="2" fill="#6b4434"/><path fill="#b77" d="M13 8q3-4 6 0z"/>'],
['run act',chrome+'<circle cx="16" cy="4" r="5" fill="#5a64c0"/><text x="16" y="6.500" font-size="7" text-anchor="middle" fill="#fff">C</text>'],
['run','<defs><linearGradient id="cv" x2="1" y2="1"><stop stop-color="#14c6cf"/><stop offset="1" stop-color="#7d2ae8"/></linearGradient></defs><circle cx="10" cy="10" r="9.500" fill="url(#cv)"/><path d="M14 6q-4-3-7 3-2 6 2 6 3 0 5-3" fill="none" stroke="#fff" stroke-width="1.800"/>'],
['run','<g fill="none" stroke="#ddd" stroke-width="1.300"><circle cx="10" cy="10" r="9"/><path d="M9 3q-4 6 3 7M16 13q-2-7-7-2M5 15q8 2 6-5"/></g>'],
['',word],['',tg],['run','<path fill="#1b3658" d="M5 2l2 3h6l2-3v16H5z"/><path fill="#4aa3ff" d="M7 7h2v1H7zM11 7h2v1h-2z"/>'],
['run','<rect width="20" height="20" fill="#22a884"/><path stroke="#fff" stroke-width="2" d="M4 12l1-4M9 12l1-4M14 12l1-4"/>'],
['','<circle cx="10" cy="10" r="10" fill="#1f62e8"/><text x="10" y="13" text-anchor="middle" font-size="9" font-weight="700" fill="#fff">zm</text>'],
['run','<rect x="1" y="1" width="18" height="18" rx="2" fill="#c01818"/><path d="M4 15Q9 10 9.500 4q1 7 7 8-7-1-12 3" fill="none" stroke="#fff" stroke-width="1.300"/>'],
['run',word],['run',tg+'<rect x="10" y="-1" width="12" height="8" rx="3" fill="#e04848"/><text x="16" y="5.500" font-size="7" text-anchor="middle" fill="#fff">04</text>']];
$('apps').innerHTML=A.map(([k,g])=>`<button class="${k}" aria-label="Приложение"><svg viewBox="0 0 20 20" overflow="visible">${g}</svg></button>`).join('');

// QR card: 33 modules, dots of two units, rounded finder marks and the fox in the middle.
let q='',r=20260804;const rnd=()=>(r=(r*1103515245+12345)%2147483648)/2147483648;
for(let y=0;y<33;y++)for(let x=0;x<33;x++){const v=rnd();if((x<8&&y<8)||(x>24&&y<8)||(x<8&&y>24)||(x>10&&x<22&&y>11&&y<21))continue;if(v<.54)q+=`<rect x="${x*3}" y="${y*3}" width="2.300" height="2.300" rx=".8"/>`}
const fd=(x,y)=>`<rect x="${x+1}" y="${y+1}" width="19" height="19" rx="2.500" fill="none" stroke="#ee8518" stroke-width="2.200"/><circle cx="${x+10.500}" cy="${y+10.500}" r="4.500"/>`;
$('qr').innerHTML=`<g fill="#ee8518">${q}${fd(0,0)}${fd(78,0)}${fd(0,78)}</g><path fill="#d9782a" d="M34 36l9 6h13l10-6-1 16-3 5-12 7-12-7-3-5z"/><path fill="#8a4526" d="M35 38l6 5-4 5zM65 38l-7 5 5 5z"/><path fill="#f0b566" d="M42 43l8 5 7-5-3 10-4 6-5-6z"/><path fill="#f7dcae" d="M43 57l7-3 7 3-7 6z"/><path fill="#15120f" d="M36 48h28l-2 5q-2 3-6 2l-5-5h-2l-4 5q-5 1-7-2zM48 57h4l-2 2z"/>`;
</script>
<script src="https://cdn.jsdelivr.net/npm/bootstrap@5.3.0/dist/js/bootstrap.bundle.min.js"></script>
</body>
</html>
